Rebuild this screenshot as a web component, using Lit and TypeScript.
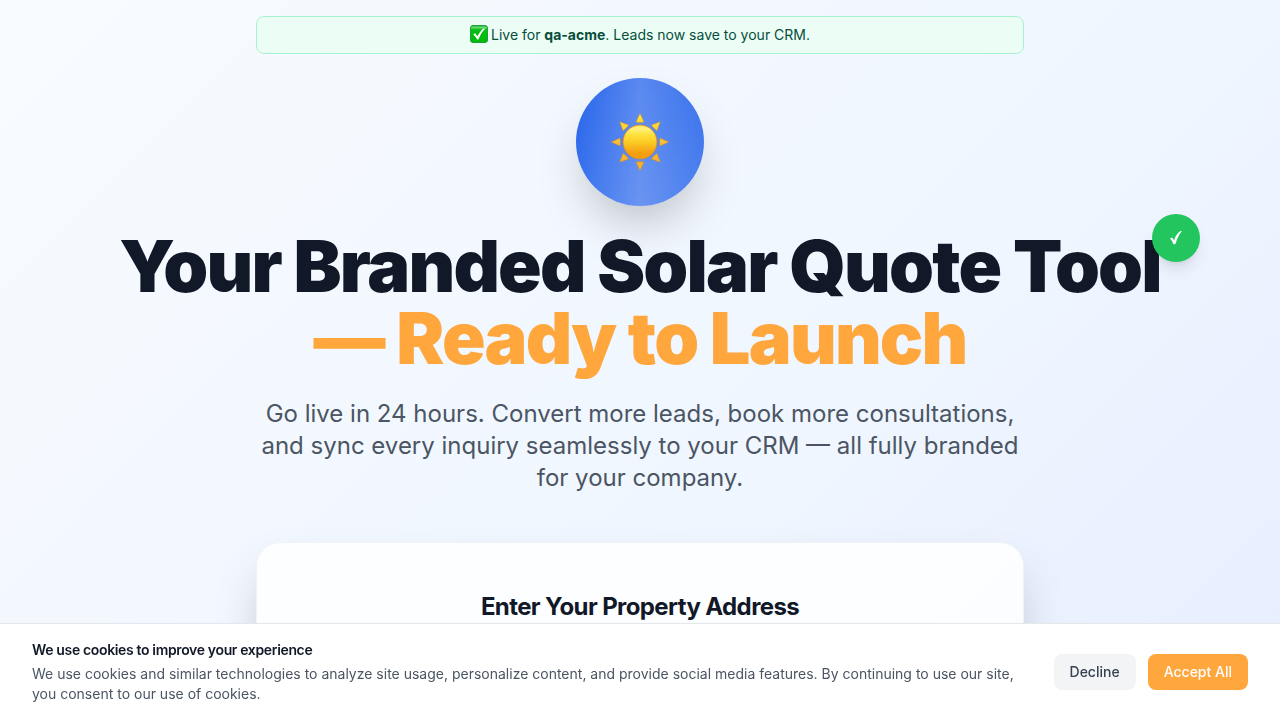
import { LitElement, html, css, svg } from "lit";
import { customElement, state } from "lit/decorators.js";

const rayAngles = [0, 45, 90, 135, 180, 225, 270, 315];

@customElement("cookie-banner")
class CookieBanner extends LitElement {
  static styles = css`
    :host {
      position: fixed;
      inset: auto 0 0 0;
      z-index: 10;
      display: block;
      background: #ffffff;
      border-top: 1px solid #e5e7eb;
      box-shadow: 0 10px 15px -3px rgba(0, 0, 0, 0.1);
    }
    .row {
      display: flex;
      align-items: center;
      gap: 32px;
      padding: 16px 32px;
    }
    .copy {
      flex: 1;
      font-size: 14px;
      line-height: 20px;
    }
    h3 {
      margin: 0 0 4px;
      font-size: 14px;
      line-height: 20px;
      font-weight: 600;
      letter-spacing: -0.025em;
      color: #111827;
    }
    p {
      margin: 0;
      color: #4b5563;
    }
    .actions {
      display: flex;
      gap: 12px;
    }
    button {
      border: 0;
      border-radius: 8px;
      padding: 8px 16px;
      font: inherit;
      font-size: 14px;
      line-height: 20px;
      font-weight: 500;
      cursor: pointer;
    }
    .decline {
      background: #f3f4f6;
      color: #374151;
    }
    .accept {
      background: #ffa63d;
      color: #ffffff;
    }
  `;

  private close() {
    this.dispatchEvent(new CustomEvent("choice"));
  }

  render() {
    return html`
      <div class="row">
        <div class="copy">
          <h3>We use cookies to improve your experience</h3>
          <p>
            We use cookies and similar technologies to analyze site usage, personalize content, and
            provide social media features. By continuing to use our site, you consent to our use of
            cookies.
          </p>
        </div>
        <div class="actions">
          <button class="decline" @click=${this.close}>Decline</button>
          <button class="accept" @click=${this.close}>Accept All</button>
        </div>
      </div>
    `;
  }
}

@customElement("app-root")
class AppRoot extends LitElement {
  static styles = css`
    :host {
      display: block;
      box-sizing: border-box;
      min-height: 100vh;
      overflow: hidden;
      background: linear-gradient(135deg, #f8fbff, #eff6ff 62%, #e0e7ff 125%);
      font-family: Inter, "Liberation Sans", sans-serif;
      color: #111827;
    }
    main {
      display: flex;
      flex-direction: column;
      align-items: center;
      max-width: 1088px;
      margin: 0 auto;
      padding: 16px 32px 96px;
      text-align: center;
    }
    .notice {
      box-sizing: border-box;
      display: flex;
      align-items: flex-start;
      justify-content: center;
      gap: 3px;
      width: 100%;
      max-width: 768px;
      padding: 8px 16px;
      border: 1px solid #a7f3d0;
      border-radius: 8px;
      background: #ecfdf5;
      color: #064e3b;
      font-size: 14px;
      line-height: 20px;
    }
    .tick {
      width: 18px;
      height: 18px;
    }
    .logo {
      display: grid;
      place-items: center;
      width: 128px;
      height: 128px;
      margin: 24px 0;
      border-radius: 50%;
      background: linear-gradient(90deg, transparent, rgba(255, 255, 255, 0.2), transparent),
        linear-gradient(135deg, #2563eb, rgba(37, 99, 235, 0.8));
      box-shadow: 0 25px 50px -12px rgba(0, 0, 0, 0.25);
    }
    .sun {
      width: 60px;
      height: 60px;
    }
    .headline {
      position: relative;
      width: 100%;
    }
    h1 {
      margin: 0;
      font-size: 72px;
      line-height: 72px;
      font-weight: 900;
      letter-spacing: -0.025em;
    }
    .accent {
      display: block;
      color: #ffa63d;
    }
    .badge {
      position: absolute;
      top: -16px;
      right: -16px;
      display: grid;
      place-items: center;
      width: 48px;
      height: 48px;
      border-radius: 50%;
      background: #22c55e;
      box-shadow: 0 10px 15px -3px rgba(0, 0, 0, 0.1), 0 4px 6px -4px rgba(0, 0, 0, 0.1);
    }
    .badge svg {
      width: 14px;
      height: 16px;
    }
    .lead {
      max-width: 768px;
      margin: 24px 0 48px;
      color: #4b5563;
      font-size: 24px;
      line-height: 32px;
    }
    .card {
      box-sizing: border-box;
      width: 100%;
      max-width: 768px;
      padding: 48px;
      border: 1px solid rgba(229, 235, 244, 0.6);
      border-radius: 24px;
      background: rgba(255, 255, 255, 0.85);
      box-shadow: 0 25px 50px -12px rgba(0, 0, 0, 0.25);
    }
    h2 {
      margin: 0;
      font-size: 24px;
      line-height: 32px;
      font-weight: 700;
      letter-spacing: -0.025em;
    }
  `;

  @state() private showCookies = true;

  render() {
    return html`
      <main>
        <div class="notice">
          <svg class="tick" viewBox="0 0 18 18" aria-hidden="true">
            <defs>
              <linearGradient id="green" x1="0" y1="0" x2="0" y2="1">
                <stop offset="0" stop-color="#2fa84b" />
                <stop offset="0.12" stop-color="#5fdc6c" />
                <stop offset="0.25" stop-color="#08bd16" />
                <stop offset="1" stop-color="#00b80a" />
              </linearGradient>
            </defs>
            <rect x="0.5" y="0.5" width="17" height="17" rx="2.5" fill="url(#green)" stroke="#17a336" />
            <path d="M3.2 9.6 5 8.3 7.6 11.2C9 8.2 11 5.3 13.5 3.2L14.9 4.1C12 7.2 10 10.3 8.5 14.6H7.1C6 12.5 4.8 11 3.2 9.6Z" fill="#fff" />
          </svg>
          <span>Live for <strong>qa-acme</strong>. Leads now save to your CRM.</span>
        </div>
        <div class="logo">
          <svg class="sun" viewBox="-30 -30 60 60" aria-hidden="true">
            <defs>
              <linearGradient id="disc" x1="0" y1="0" x2="0" y2="1">
                <stop offset="0" stop-color="#ffe95a" />
                <stop offset="0.12" stop-color="#fff07a" />
                <stop offset="0.3" stop-color="#fddf38" />
                <stop offset="0.5" stop-color="#fccb25" />
                <stop offset="0.85" stop-color="#f39c10" />
                <stop offset="1" stop-color="#f6a516" />
              </linearGradient>
              <linearGradient id="rays" gradientUnits="userSpaceOnUse" x1="0" y1="-29" x2="0" y2="29">
                <stop offset="0" stop-color="#ffe83a" />
                <stop offset="0.5" stop-color="#fcbd35" />
                <stop offset="1" stop-color="#f8ad28" />
              </linearGradient>
            </defs>
            <g fill="url(#rays)" stroke="#b98a4a" stroke-width="0.6" stroke-linejoin="round">
              ${rayAngles.map((a) => {
                const t = (a * Math.PI) / 180;
                const at = (x: number, y: number) =>
                  `${(x * Math.cos(t) - y * Math.sin(t)).toFixed(2)} ${(x * Math.sin(t) + y * Math.cos(t)).toFixed(2)}`;
                return svg`<path d="M${at(0, -28.8)}L${at(4.1, -20)}Q${at(0, -19)} ${at(-4.1, -20)}Z" />`;
              })}
            </g>
            <circle r="17" fill="url(#disc)" stroke="#d8832a" stroke-width="0.8" />
          </svg>
        </div>
        <div class="headline">
          <h1>Your Branded Solar Quote Tool<span class="accent">— Ready to Launch</span></h1>
          <div class="badge">
            <svg viewBox="0 0 14 16" aria-hidden="true">
              <path d="M1 8.6 3.1 7.6Q4.4 8.9 5 10.4 6.9 4.4 11.4 1.1L12.9 1Q8.8 6 6.6 13.8L4.7 14.6Q3.4 10.9 1 8.6Z" fill="#fff" />
            </svg>
          </div>
        </div>
        <p class="lead">
          Go live in 24 hours. Convert more leads, book more consultations, and sync every inquiry
          seamlessly to your CRM — all fully branded for your company.
        </p>
        <section class="card">
          <h2>Enter Your Property Address</h2>
        </section>
      </main>
      ${this.showCookies
        ? html`<cookie-banner @choice=${() => (this.showCookies = false)}></cookie-banner>`
        : null}
    `;
  }
}
